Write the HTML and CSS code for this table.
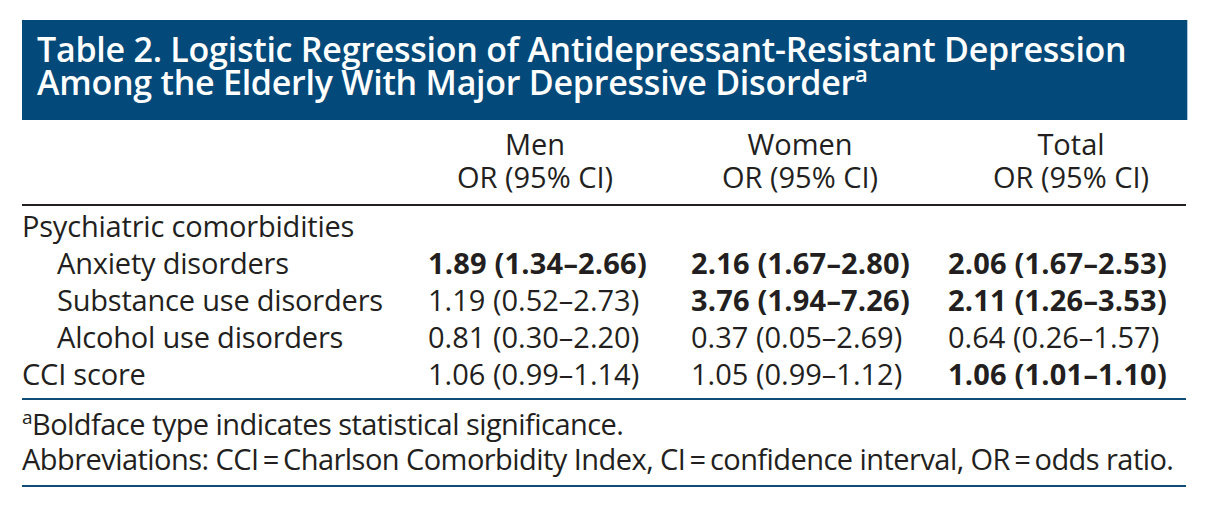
FILE: index.html
```html
<!DOCTYPE html>
<html lang="en">
<head>
<meta charset="utf-8">
<title>Table 2</title>
<link rel="stylesheet" href="styles.css">
</head>
<body>
<div class="figure">
  <div class="title">Table 2. Logistic Regression of Antidepressant-Resistant Depression<br>Among the Elderly With Major Depressive Disorder<sup class="sup-title">a</sup></div>
  <table class="data">
    <colgroup>
      <col class="col-label">
      <col class="col-men">
      <col class="col-women">
      <col class="col-total">
    </colgroup>
    <thead>
      <tr>
        <th class="h-label"></th>
        <th class="h-men">Men<br>OR (95% CI)</th>
        <th class="h-women">Women<br>OR (95% CI)</th>
        <th class="h-total">Total<br>OR (95% CI)</th>
      </tr>
    </thead>
    <tbody>
      <tr class="first">
        <td class="label">Psychiatric comorbidities</td>
        <td class="v-men"></td>
        <td class="v-women"></td>
        <td class="v-total"></td>
      </tr>
      <tr>
        <td class="label sub">Anxiety disorders</td>
        <td class="v-men sig">1.89 (1.34–2.66)</td>
        <td class="v-women sig">2.16 (1.67–2.80)</td>
        <td class="v-total sig">2.06 (1.67–2.53)</td>
      </tr>
      <tr>
        <td class="label sub">Substance use disorders</td>
        <td class="v-men">1.19 (0.52–2.73)</td>
        <td class="v-women sig">3.76 (1.94–7.26)</td>
        <td class="v-total sig">2.11 (1.26–3.53)</td>
      </tr>
      <tr>
        <td class="label sub">Alcohol use disorders</td>
        <td class="v-men">0.81 (0.30–2.20)</td>
        <td class="v-women">0.37 (0.05–2.69)</td>
        <td class="v-total">0.64 (0.26–1.57)</td>
      </tr>
      <tr class="last">
        <td class="label">CCI score</td>
        <td class="v-men">1.06 (0.99–1.14)</td>
        <td class="v-women">1.05 (0.99–1.12)</td>
        <td class="v-total sig">1.06 (1.01–1.10)</td>
      </tr>
    </tbody>
  </table>
  <div class="notes">
    <p class="note"><sup class="sup-note">a</sup>Boldface type indicates statistical significance.</p>
    <p class="note">Abbreviations: CCI&#8201;=&#8201;Charlson Comorbidity Index, CI&#8201;=&#8201;confidence interval, OR&#8201;=&#8201;odds ratio.</p>
  </div>
</div>
</body>
</html>
```
FILE: styles.css
```css
html, body {
  margin: 0;
  padding: 0;
  background: #ffffff;
}

body {
  font-family: "Open Sans", "Noto Sans", "Liberation Sans", sans-serif;
  color: #231f20;
}

.figure {
  width: 1164px;
  margin: 20px 0 0 22px;
}

.title {
  width: 1150px;
  margin-right: -2px;
  background: #03497a;
  border-right: 1px solid #a9c8e2;
  color: #ffffff;
  font-weight: 600;
  font-size: 34px;
  line-height: 33px;
  padding: 13px 0 21px 15px;
  letter-spacing: -0.25px;
}

.sup-title {
  font-size: 22px;
  line-height: 0;
  vertical-align: 13px;
}

.data {
  width: 1164px;
  border-collapse: collapse;
  font-size: 29px;
  table-layout: fixed;
}

.col-label { width: 383px; }
.col-men { width: 260px; }
.col-women { width: 270px; }
.col-total { width: 251px; }

.data th {
  font-weight: 400;
  text-align: center;
  line-height: 33px;
  padding: 7px 0 11px 0;
  border-bottom: 2px solid #231f20;
}

.data th.h-total {
  padding-left: 21px;
}

.data td {
  line-height: 37px;
  padding: 0;
  white-space: nowrap;
  text-align: left;
}

.data td.label {
  letter-spacing: -0.2px;
}

.data tr.first td {
  padding-top: 1px;
}

.data tr.last td {
  padding-bottom: 6px;
  border-bottom: 2px solid #0f4d78;
}

.data td.sub {
  padding-left: 35px;
}

.data td.v-men { padding-left: 23px; }
.data td.v-women { padding-left: 26px; }
.data td.v-total { padding-left: 13px; }

.data td.sig {
  font-weight: 700;
  letter-spacing: 0.2px;
}

.notes {
  padding: 6px 0 9px 0;
  border-bottom: 2px solid #0f4d78;
}

.note {
  margin: 0;
  font-size: 29px;
  line-height: 35px;
  white-space: nowrap;
  letter-spacing: -0.55px;
}

.sup-note {
  font-size: 19px;
  line-height: 0;
  vertical-align: 11px;
}
```
